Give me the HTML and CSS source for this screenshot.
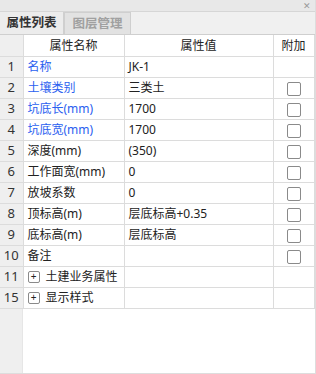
FILE: index.html
```html
<!DOCTYPE html>
<html lang="zh-CN">
<head>
    <meta charset="UTF-8">
    <title>属性列表</title>
    <link rel="stylesheet" href="styles.css">
</head>
<body>
    <div class="panel">
        <div class="title-bar">
            <span class="close">&#x2715;</span>
        </div>
        <div class="tabs">
            <div class="tab active">属性列表</div>
            <div class="tab">图层管理</div>
        </div>
        <div class="body">
            <table class="grid">
                <colgroup>
                    <col class="c-num">
                    <col class="c-name">
                    <col class="c-val">
                    <col class="c-add">
                </colgroup>
                <thead>
                    <tr><th></th><th>属性名称</th><th>属性值</th><th>附加</th></tr>
                </thead>
                <tbody>
                    <tr><td class="num">1</td><td class="blue">名称</td><td>JK-1</td><td></td></tr>
                    <tr><td class="num">2</td><td class="blue">土壤类别</td><td>三类土</td><td class="chk"><span class="box"></span></td></tr>
                    <tr><td class="num">3</td><td class="blue">坑底长(mm)</td><td>1700</td><td class="chk"><span class="box"></span></td></tr>
                    <tr><td class="num">4</td><td class="blue">坑底宽(mm)</td><td>1700</td><td class="chk"><span class="box"></span></td></tr>
                    <tr><td class="num">5</td><td>深度(mm)</td><td>(350)</td><td class="chk"><span class="box"></span></td></tr>
                    <tr><td class="num">6</td><td>工作面宽(mm)</td><td>0</td><td class="chk"><span class="box"></span></td></tr>
                    <tr><td class="num">7</td><td>放坡系数</td><td>0</td><td class="chk"><span class="box"></span></td></tr>
                    <tr><td class="num">8</td><td>顶标高(m)</td><td>层底标高+0.35</td><td class="chk"><span class="box"></span></td></tr>
                    <tr><td class="num">9</td><td>底标高(m)</td><td>层底标高</td><td class="chk"><span class="box"></span></td></tr>
                    <tr><td class="num">10</td><td>备注</td><td></td><td class="chk"><span class="box"></span></td></tr>
                    <tr><td class="num">11</td><td class="group"><span class="plus">+</span>土建业务属性</td><td></td><td></td></tr>
                    <tr><td class="num">15</td><td class="group"><span class="plus">+</span>显示样式</td><td></td><td></td></tr>
                </tbody>
            </table>
            <div class="filler"></div>
        </div>
    </div>
</body>
</html>
```

FILE: styles.css
```css
* {
    box-sizing: border-box;
}

body {
    margin: 0;
    font-family: "Noto Sans", "Noto Sans CJK SC", sans-serif;
    font-size: 12px;
    color: #222;
    background: #fff;
}

.panel {
    width: 316px;
    height: 374px;
    display: flex;
    flex-direction: column;
    border-right: 1px solid #ddd;
    border-bottom: 1px solid #ddd;
}

.title-bar {
    height: 12px;
    background: #e8e8e8;
    border-bottom: 1px solid #d6d6d6;
    display: flex;
    justify-content: flex-end;
    align-items: center;
    padding-right: 4px;
}

.close {
    font-size: 9px;
    color: #999;
    line-height: 11px;
}

.tabs {
    height: 23px;
    background: #f0f0f0;
    border-bottom: 1px solid #cfcfcf;
    display: flex;
}

.tab {
    width: 67px;
    height: 22px;
    line-height: 21px;
    text-align: center;
    font-size: 12.5px;
    font-weight: bold;
    color: #a0a0a0;
    background: #e2e2e2;
    border: 1px solid #cfcfcf;
    border-bottom: none;
}

.tab.active {
    width: 64px;
    color: #333;
    background: #ececec;
    border: none;
    border-right: 1px solid #cfcfcf;
}

.body {
    flex: 1;
    display: flex;
    flex-direction: column;
    background: #fff;
    padding-right: 2px;
}

.grid {
    border-collapse: collapse;
    table-layout: fixed;
    width: 314px;
}

.c-num { width: 23px; }
.c-name { width: 101px; }
.c-val { width: 149px; }
.c-add { width: 41px; }

.grid th,
.grid td {
    height: 21px;
    padding: 0 4px;
    border: 1px solid #dcdcdc;
    white-space: nowrap;
    line-height: 19px;
    font-weight: normal;
}

.grid thead th {
    text-align: center;
    border-top: none;
}

.grid th:first-child,
.grid td:first-child {
    border-left: none;
}

.grid td.num {
    background: #efefef;
    text-align: center;
    padding: 0;
    font-size: 13px;
    color: #333;
}

.grid thead th:first-child {
    background: #efefef;
}

.blue {
    color: #2a60f0;
}

.chk {
    text-align: center;
}

.box {
    display: inline-block;
    width: 14px;
    height: 14px;
    border: 1px solid #8a8a8a;
    border-radius: 2px;
    vertical-align: middle;
}

.plus {
    display: inline-block;
    width: 12px;
    height: 12px;
    border: 1px solid #8a8a8a;
    border-radius: 2px;
    font-size: 10px;
    line-height: 9px;
    text-align: center;
    margin-right: 6px;
    vertical-align: middle;
    position: relative;
    top: -1px;
}

.filler {
    flex: 1;
    width: 23px;
    background: #efefef;
    border-right: 1px solid #e6e6e6;
}
```
